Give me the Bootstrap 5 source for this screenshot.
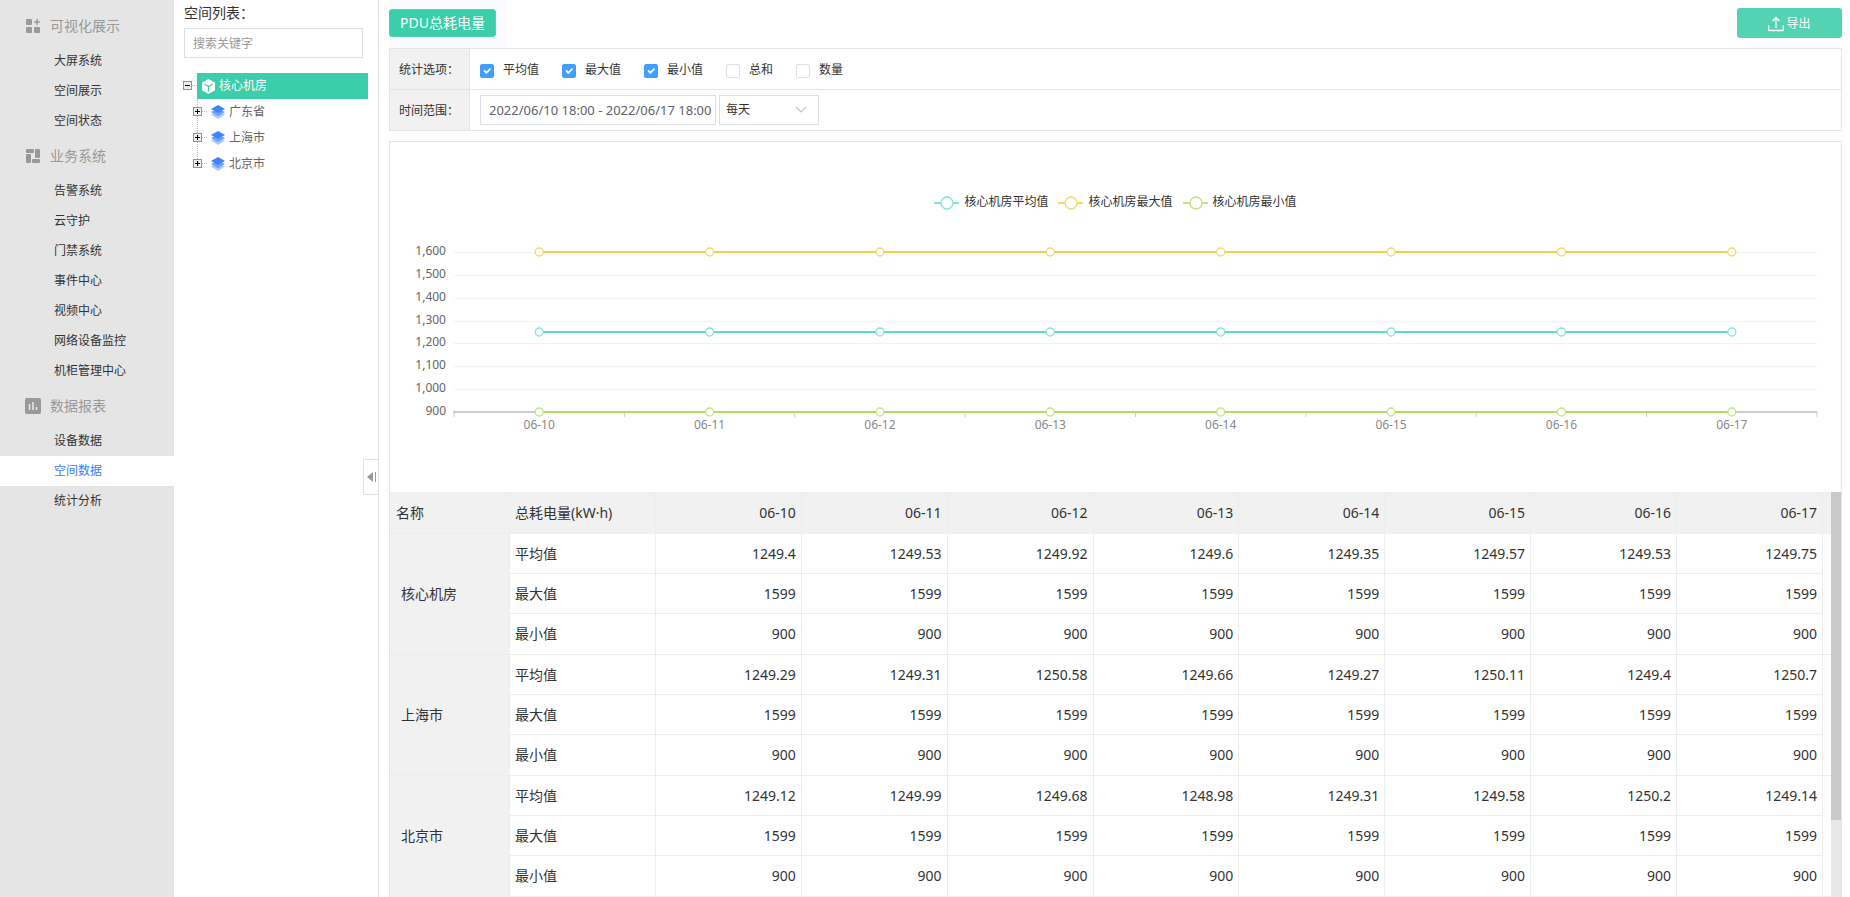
<!DOCTYPE html>
<html lang="zh-CN">
<head>
<meta charset="utf-8">
<meta name="viewport" content="width=device-width, initial-scale=1">
<title>空间数据</title>
<link rel="stylesheet" href="https://cdn.jsdelivr.net/npm/bootstrap@5.3.0/dist/css/bootstrap.min.css">
<style>
  :root { --green: #3aceaa; --line: #e4e5e6; --cell: #ededed; --tint: #f1f1f1; }
  body { font: 12px/20px "Noto Sans", "Noto Sans CJK SC", sans-serif; color: #333; background: #fff; }
  a { text-decoration: none; }

  .side-menu { width: 174px; background: #e5e5e5; padding-top: 6px; }
  .menu-title { height: 40px; padding-left: 25px; gap: 9px; font-size: 14px; color: #999; }
  .menu-title svg { width: 16px; height: 16px; fill: #999; }
  .side-menu .nav-link { height: 30px; padding: 5px 0 5px 54px; color: #333; }
  .side-menu .nav-link.active { background: #fff; color: #3a7df5; }

  .space-panel { width: 205px; border-right: 1px solid #e2e4e4; padding: 3px 10px 0 9px; }
  .space-panel h2 { font-size: 14px; line-height: 20px; margin: 0 0 5px 1px; }
  .plain-field { height: 30px; border: 1px solid #dcdfe6; border-radius: 0; font-size: 12px; color: #333; }
  .search-box { width: 179px; margin-left: 1px; padding: 4px 8px; }
  .search-box::placeholder { color: #999; }
  .tree { margin: 15px 0 0; }
  .tree-row { height: 26px; }
  .tree-row a { color: #666; gap: 4px; }
  .tree-root a { background: var(--green); color: #fff; padding-left: 5px; height: 26px; }
  .tree-kids { padding-left: 10px; }
  .tree-kids a { padding-left: 4px; }
  .toggle { width: 9px; height: 9px; border: 0; padding: 0; margin-bottom: 2px; background: none; line-height: 0; }
  .twig { width: 5px; height: 1px; margin-bottom: 2px; border-top: 1px dotted #bbb; }
  .branch { position: absolute; left: 14px; top: 26px; bottom: 14px; border-left: 1px dotted #bbb; }
  .fold { position: absolute; right: 0; top: 459px; width: 15px; height: 36px; border: 1px solid #e0e0e0; border-right: 0; background: #fff; padding: 0 0 0 2px; line-height: 0; }

  .content { padding: 0 8px 0 10px; }
  .tool-bar { height: 48px; }
  .tab-slot { background: #fafbff; padding: 9px 11px 0 0; }
  .tab-btn { height: 28px; padding: 0 10px; font-size: 14px; line-height: 26px; border-radius: 3px; background: var(--green); border: 1px solid #4ed3b3; color: #fff; }
  .export-btn { width: 105px; height: 30px; margin-top: 8px; padding: 2px 0 0; border: 0; border-radius: 3px; background: #54d3b4; color: #fff; font-size: 12px; gap: 2px; }
  .filter { border: 1px solid var(--line); margin-bottom: 10px; }
  .filter-row { height: 40px; }
  .filter-row:first-child { height: 41px; border-bottom: 1px solid var(--line); }
  .filter-name { width: 80px; background: var(--tint); border-right: 1px solid var(--line); padding: 2px 0 0 9px; }
  .filter-body { padding: 0 0 0 10px; }
  .option { gap: 9px; margin-right: 23px; padding-top: 2px; }
  .option .form-check-input { width: 14px; height: 14px; margin: 4px 0 0; border: 1px solid #dcdfe6; border-radius: 2px; }
  .option .form-check-input:checked { background-color: #409eff; border-color: #409eff; }
  .range-box { width: 236px; font-size: 13px; color: #606266; padding: 4px 0 4px 8px; }
  .step-box { width: 100px; margin-left: 3px; padding: 4px 6px; background: #fff url("data:image/svg+xml,%3Csvg xmlns='http://www.w3.org/2000/svg' width='12' height='8'%3E%3Cpath d='M1 1l5 5 5-5' fill='none' stroke='%23c0c4cc' stroke-width='1.2'/%3E%3C/svg%3E") no-repeat right 11px center; }

  .report { border: 1px solid var(--line); border-bottom: 0; }
  .chart { height: 350px; padding: 50px 24px 0 64px; }
  .legend-bar { gap: 10px; margin: 0 -24px 40px -64px; }
  .legend-bar span { gap: 5px; }
  .plot { height: 160px; }
  .plot text { font-size: 12px; fill: #666; }
  .plot .day { fill: #888; }

  .data-table { table-layout: fixed; width: 100%; font-size: 14px; border-collapse: separate; border-spacing: 0; }
  .data-table th, .data-table td { font-weight: 400; height: 40px; padding: 0 5px; border: solid var(--cell); border-width: 0 1px 1px 0; text-align: right; }
  .data-table thead th { height: 42px; background: var(--tint); border-top-width: 1px; }
  .data-table .txt { text-align: left; }
  .data-table th.txt:first-child { padding-left: 6px; }
  .data-table .group { background: var(--tint); text-align: left; padding-left: 11px; }
  .data-table .last-of-group > * { height: 41px; }
  .data-table .filler { border-right: 0; padding: 0; }
  .scroll-track { width: 10px; background: #e8e8e8; }
  .scroll-thumb { height: 81%; background: #c9c9c9; }
</style>
</head>
<body>
<svg width="0" height="0" class="position-absolute" aria-hidden="true">
  <symbol id="layers" viewBox="0 0 14 14">
    <path d="M0 9.600 7 6l7 3.600L7 14z" fill="#adcbff"/>
    <path d="M0 7 7 3.400l7 3.600-7 4.200z" fill="#6ea3fc"/>
    <path d="M0 4 7 0l7 4-7 4z" fill="#3c86fb"/>
  </symbol>
  <symbol id="box-plus" viewBox="0 0 9 9">
    <rect x=".5" y=".5" width="8" height="8" fill="#eee" stroke="#7898b5"/>
    <path d="M2 4.500h5M4.500 2v5" stroke="#000"/>
  </symbol>
  <symbol id="box-minus" viewBox="0 0 9 9">
    <rect x=".5" y=".5" width="8" height="8" fill="#eee" stroke="#7898b5"/>
    <path d="M2 4.500h5" stroke="#000"/>
  </symbol>
</svg>

<div class="d-flex vh-100 overflow-hidden">
  <nav class="side-menu flex-shrink-0">
    <div class="menu-title d-flex align-items-center">
      <svg viewBox="0 0 16 16"><rect x="1" y="1" width="6" height="6" rx="1"/><rect x="1" y="9" width="6" height="6" rx="1"/><rect x="9" y="9" width="6" height="6" rx="1"/><path d="M11.300 1h1.500v2.200H15v1.500h-2.200V7h-1.500V4.700H9V3.200h2.300z"/></svg>
      可视化展示
    </div>
    <div class="nav flex-column">
      <a class="nav-link" href="#">大屏系统</a>
      <a class="nav-link" href="#">空间展示</a>
      <a class="nav-link" href="#">空间状态</a>
    </div>
    <div class="menu-title d-flex align-items-center">
      <svg viewBox="0 0 16 16"><rect x="1" y="1" width="8" height="4" rx="1"/><rect x="1" y="6" width="5" height="9" rx="1"/><rect x="10" y="1" width="5" height="9" rx="1"/><rect x="7" y="11" width="8" height="4" rx="1"/></svg>
      业务系统
    </div>
    <div class="nav flex-column">
      <a class="nav-link" href="#">告警系统</a>
      <a class="nav-link" href="#">云守护</a>
      <a class="nav-link" href="#">门禁系统</a>
      <a class="nav-link" href="#">事件中心</a>
      <a class="nav-link" href="#">视频中心</a>
      <a class="nav-link" href="#">网络设备监控</a>
      <a class="nav-link" href="#">机柜管理中心</a>
    </div>
    <div class="menu-title d-flex align-items-center">
      <svg viewBox="0 0 16 16"><rect width="16" height="16" rx="2"/><path d="M4.500 6v6M8 4v8M11.500 9v3" stroke="#e5e5e5" stroke-width="1.600"/></svg>
      数据报表
    </div>
    <div class="nav flex-column">
      <a class="nav-link" href="#">设备数据</a>
      <a class="nav-link active" href="#" aria-current="page">空间数据</a>
      <a class="nav-link" href="#">统计分析</a>
    </div>
  </nav>

  <aside class="space-panel flex-shrink-0 position-relative">
    <h2 class="fw-normal"><label for="search">空间列表：</label></h2>
    <input id="search" class="form-control plain-field search-box" type="text" placeholder="搜索关键字">
    <div class="tree position-relative">
      <div class="branch"></div>
      <div class="tree-row tree-root d-flex align-items-center">
        <button class="toggle position-relative" aria-label="收起"><svg width="9" height="9"><use href="#box-minus"/></svg></button>
        <span class="twig"></span>
        <a class="d-flex flex-grow-1 align-items-center" href="#">
          <svg width="13" height="15" viewBox="0 0 13 15"><path d="M6.500 0 13 3.600v7.600L6.500 15 0 11.200V3.600z" fill="#fff"/><path d="M2.500 5.200l4 2.300 4-2.300M6.500 7.500v5" fill="none" stroke="#3aceaa" stroke-width="1.300"/></svg>
          核心机房
        </a>
      </div>
      <div class="tree-kids">
        <div class="tree-row d-flex align-items-center"><button class="toggle position-relative" aria-label="展开"><svg width="9" height="9"><use href="#box-plus"/></svg></button><span class="twig"></span><a class="d-flex align-items-center" href="#"><svg width="14" height="14"><use href="#layers"/></svg>广东省</a></div>
        <div class="tree-row d-flex align-items-center"><button class="toggle position-relative" aria-label="展开"><svg width="9" height="9"><use href="#box-plus"/></svg></button><span class="twig"></span><a class="d-flex align-items-center" href="#"><svg width="14" height="14"><use href="#layers"/></svg>上海市</a></div>
        <div class="tree-row d-flex align-items-center"><button class="toggle position-relative" aria-label="展开"><svg width="9" height="9"><use href="#box-plus"/></svg></button><span class="twig"></span><a class="d-flex align-items-center" href="#"><svg width="14" height="14"><use href="#layers"/></svg>北京市</a></div>
      </div>
    </div>
    <button class="fold" aria-label="收起列表"><svg width="10" height="12"><path d="M6 1v10L0 6z" fill="#999"/><path d="M8.500 1v10" stroke="#999"/></svg></button>
  </aside>

  <main class="content flex-grow-1 d-flex flex-column overflow-hidden">
    <div class="tool-bar d-flex justify-content-between align-items-start">
      <div class="tab-slot h-100"><button class="btn tab-btn">PDU总耗电量</button></div>
      <button class="btn export-btn d-flex align-items-center justify-content-center">
        <svg width="16" height="16" viewBox="0 0 16 16" fill="none" stroke="#fff" stroke-width="1.300"><path d="M.7 9v4.800q0 .7.700.7h13.200q.7 0 .7-.7V9M8 12V1.500M4.500 5 8 1.500 11.500 5"/></svg>导出
      </button>
    </div>

    <form class="filter">
      <div class="filter-row d-flex">
        <div class="filter-name d-flex align-items-center">统计选项：</div>
        <div class="filter-body d-flex align-items-center">
          <label class="option d-flex"><input class="form-check-input" type="checkbox" checked>平均值</label>
          <label class="option d-flex"><input class="form-check-input" type="checkbox" checked>最大值</label>
          <label class="option d-flex"><input class="form-check-input" type="checkbox" checked>最小值</label>
          <label class="option d-flex"><input class="form-check-input" type="checkbox">总和</label>
          <label class="option d-flex"><input class="form-check-input" type="checkbox">数量</label>
        </div>
      </div>
      <div class="filter-row d-flex">
        <label class="filter-name d-flex align-items-center" for="range">时间范围：</label>
        <div class="filter-body d-flex align-items-center">
          <input id="range" class="form-control plain-field range-box" type="text" value="2022/06/10 18:00 - 2022/06/17 18:00">
          <select class="form-select plain-field step-box" aria-label="统计周期"><option>每天</option></select>
        </div>
      </div>
    </form>

    <section class="report flex-grow-1 d-flex flex-column overflow-hidden">
      <div class="chart flex-shrink-0">
        <div class="legend-bar d-flex justify-content-center" id="legend"></div>
        <svg class="plot d-block w-100 overflow-visible" id="plot" role="img" aria-label="PDU总耗电量"></svg>
      </div>
      <div class="d-flex flex-grow-1 overflow-hidden">
        <div class="flex-grow-1 overflow-hidden">
          <table class="data-table">
            <colgroup id="cols"></colgroup>
            <thead><tr id="head"></tr></thead>
            <tbody id="rows"></tbody>
          </table>
        </div>
        <div class="scroll-track flex-shrink-0"><div class="scroll-thumb"></div></div>
      </div>
    </section>
  </main>
</div>

<script src="https://cdn.jsdelivr.net/npm/bootstrap@5.3.0/dist/js/bootstrap.bundle.min.js"></script>
<script>
  const days = ['06-10', '06-11', '06-12', '06-13', '06-14', '06-15', '06-16', '06-17'];
  const averages = {
    '核心机房': [1249.4, 1249.53, 1249.92, 1249.6, 1249.35, 1249.57, 1249.53, 1249.75],
    '上海市': [1249.29, 1249.31, 1250.58, 1249.66, 1249.27, 1250.11, 1249.4, 1250.7],
    '北京市': [1249.12, 1249.99, 1249.68, 1248.98, 1249.31, 1249.58, 1250.2, 1249.14]
  };
  const series = [
    { name: '核心机房平均值', value: 1250, line: '#5fdccb', ring: '#7fe6da' },
    { name: '核心机房最大值', value: 1600, line: '#edd250', ring: '#f3d96c' },
    { name: '核心机房最小值', value: 900, line: '#b4db62', ring: '#bfe67c' }
  ];
  const byId = id => document.getElementById(id);

  byId('legend').innerHTML = series.map(s =>
    `<span class="d-flex align-items-center"><svg width="25" height="20"><path d="M0 11h25" stroke="${s.ring}" stroke-width="2"/><circle cx="13" cy="11" r="6" fill="#fff" stroke="${s.ring}" stroke-width="1.3"/></svg>${s.name}</span>`).join('');

  // Horizontal places are shares of the width, so the plot follows the window.
  const yOf = v => Math.round((1600 - v) * 160 / 700);
  const slot = 100 / days.length;
  let art = '';
  for (let v = 1600; v >= 900; v -= 100) {
    const y = yOf(v);
    if (v > 900) art += `<line x1="0" x2="100%" y1="${y + .5}" y2="${y + .5}" stroke="#f2f2f2"/>`;
    art += `<text x="-8" y="${y + 3}" text-anchor="end">${v.toLocaleString('en-US')}</text>`;
  }
  art += '<line x1="-1" x2="100%" y1="160" y2="160" stroke="#ccc" stroke-width="2"/>';
  for (let i = 0; i <= days.length; i++)
    art += `<line x1="${i * slot}%" x2="${i * slot}%" y1="160" y2="165" stroke="#ccc"/>`;
  days.forEach((d, i) => art += `<text class="day" x="${(i + .5) * slot}%" y="177" text-anchor="middle">${d}</text>`);
  series.forEach(s => {
    const y = yOf(s.value);
    art += `<line x1="${slot / 2}%" x2="${100 - slot / 2}%" y1="${y}" y2="${y}" stroke="${s.line}" stroke-width="2"/>`;
    days.forEach((d, i) => art += `<circle cx="${(i + .5) * slot}%" cy="${y}" r="4" fill="#fff" stroke="${s.ring}" stroke-width="1.3"/>`);
  });
  byId('plot').innerHTML = art;

  byId('cols').innerHTML = '<col width="120">' + '<col>'.repeat(days.length + 1) + '<col width="8">';
  byId('head').innerHTML = '<th class="txt">名称</th><th class="txt">总耗电量(kW·h)</th>' +
    days.map(d => `<th>${d}</th>`).join('') + '<th class="filler"></th>';
  const cells = list => list.map(v => `<td>${v}</td>`).join('');
  byId('rows').innerHTML = Object.entries(averages).map(([place, avg]) =>
    `<tr><th class="group" rowspan="3">${place}</th><td class="txt">平均值</td>${cells(avg)}<td class="filler" rowspan="3"></td></tr>
     <tr><td class="txt">最大值</td>${cells(days.map(() => 1599))}</tr>
     <tr class="last-of-group"><td class="txt">最小值</td>${cells(days.map(() => 900))}</tr>`).join('');
</script>
</body>
</html>
